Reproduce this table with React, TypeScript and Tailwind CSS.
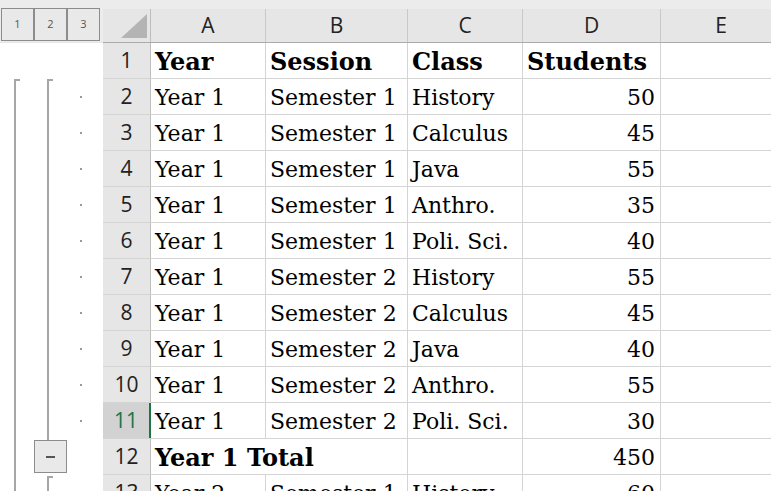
import React from "react";

type Row = { n: number; a: string; b: string; c: string; d: string };

const data: Row[] = [
  { n: 2, a: "Year 1", b: "Semester 1", c: "History", d: "50" },
  { n: 3, a: "Year 1", b: "Semester 1", c: "Calculus", d: "45" },
  { n: 4, a: "Year 1", b: "Semester 1", c: "Java", d: "55" },
  { n: 5, a: "Year 1", b: "Semester 1", c: "Anthro.", d: "35" },
  { n: 6, a: "Year 1", b: "Semester 1", c: "Poli. Sci.", d: "40" },
  { n: 7, a: "Year 1", b: "Semester 2", c: "History", d: "55" },
  { n: 8, a: "Year 1", b: "Semester 2", c: "Calculus", d: "45" },
  { n: 9, a: "Year 1", b: "Semester 2", c: "Java", d: "40" },
  { n: 10, a: "Year 1", b: "Semester 2", c: "Anthro.", d: "55" },
  { n: 11, a: "Year 1", b: "Semester 2", c: "Poli. Sci.", d: "30" },
];

const serif = { fontFamily: '"DejaVu Serif", "Liberation Serif", serif' };
const sans = { fontFamily: '"Open Sans", "Liberation Sans", sans-serif' };

function Cell({
  w,
  children,
  right,
  bold,
  last,
}: {
  w: string;
  children?: React.ReactNode;
  right?: boolean;
  bold?: boolean;
  last?: boolean;
}) {
  return (
    <div
      className={`${w} h-full shrink-0 ${last ? "" : "border-r border-[#d4d4d4]"} flex items-end pb-[1px] ${
        right ? "justify-end pr-[5px]" : "pl-[4px]"
      } ${bold ? "font-bold text-[24px]" : "text-[22px]"} whitespace-nowrap overflow-visible leading-[30px] text-black`}
      style={serif}
    >
      {children}
    </div>
  );
}

function RowHead({ n, selected }: { n: number; selected?: boolean }) {
  return (
    <div
      className={`w-[48px] h-full shrink-0 flex items-center justify-center text-[21px] ${
        selected
          ? "bg-[#d2d2d2] text-[#217346] border-r-2 border-[#217346]"
          : "bg-[#e6e6e6] text-[#222] border-r border-[#bdbdbd]"
      }`}
      style={sans}
    >
      {n}
    </div>
  );
}

function ColHead({ label, w, last }: { label: string; w: string; last?: boolean }) {
  return (
    <div className={`${w} shrink-0 h-full flex flex-col`}>
      <div className="h-[9px] bg-[#ececec]" />
      <div
        className={`flex-1 flex items-center justify-center text-[21px] text-[#222] ${
          last ? "" : "border-r border-[#c8c8c8]"
        }`}
        style={sans}
      >
        {label}
      </div>
    </div>
  );
}

function OutlineBtn({ label }: { label: string }) {
  return (
    <div
      className="w-[33px] h-[33px] border border-[#8c8c8c] bg-[#e9e9e9] flex items-center justify-center text-[11px] text-[#555]"
      style={sans}
    >
      {label}
    </div>
  );
}

export default function App() {
  const dots = data.map((_, i) => 53 + 36 * i);
  return (
    <div className="w-[771px] h-[491px] overflow-hidden bg-white flex">
      {/* Outline gutter */}
      <div className="w-[103px] shrink-0 flex flex-col">
        <div className="h-[43px] bg-[#ececec] border-b border-[#e6e6e6] pt-[8px] pl-[1px] flex">
          <OutlineBtn label="1" />
          <OutlineBtn label="2" />
          <OutlineBtn label="3" />
        </div>
        <div className="relative flex-1 bg-white">
          {/* outer bracket */}
          <div className="absolute left-[14px] top-[36px] w-[2px] h-[500px] bg-[#a6a6a6]" />
          <div className="absolute left-[14px] top-[36px] w-[6px] h-[2px] bg-[#a6a6a6]" />
          {/* inner bracket */}
          <div className="absolute left-[47px] top-[36px] w-[2px] h-[361px] bg-[#a6a6a6]" />
          <div className="absolute left-[47px] top-[36px] w-[6px] h-[2px] bg-[#a6a6a6]" />
          {dots.map((y) => (
            <div
              key={y}
              className="absolute left-[80px] w-[2px] h-[2px] bg-[#9a9a9a]"
              style={{ top: y }}
            />
          ))}
          {/* minus button */}
          <div className="absolute left-[34px] top-[397px] w-[33px] h-[33px] border border-[#8c8c8c] bg-[#e9e9e9] flex items-center justify-center">
            <div className="w-[9px] h-[2px] bg-[#555]" />
          </div>
          <div className="absolute left-[47px] top-[433px] w-[2px] h-[40px] bg-[#a6a6a6]" />
          <div className="absolute left-[47px] top-[433px] w-[6px] h-[2px] bg-[#a6a6a6]" />
        </div>
      </div>

      {/* Sheet */}
      <div className="flex-1 flex flex-col min-w-0">
        {/* column headers */}
        <div className="h-[43px] shrink-0 flex bg-[#e6e6e6] border-b border-[#ababab]">
          <div className="w-[48px] shrink-0 h-full flex flex-col">
            <div className="h-[9px] bg-[#ececec]" />
            <div className="flex-1 border-r border-[#bdbdbd] flex items-end justify-end pr-[3px] pb-[4px]">
              <svg width="26" height="24" viewBox="0 0 26 24">
                <polygon points="26,0 26,24 0,24" fill="#b4b4b4" />
              </svg>
            </div>
          </div>
          <ColHead label="A" w="w-[115px]" />
          <ColHead label="B" w="w-[142px]" />
          <ColHead label="C" w="w-[115px]" />
          <ColHead label="D" w="w-[138px]" />
          <ColHead label="E" w="w-[120px]" last />
        </div>

        {/* row 1 */}
        <div className="h-[36px] shrink-0 flex border-b border-[#d4d4d4]">
          <RowHead n={1} />
          <Cell w="w-[115px]" bold>Year</Cell>
          <Cell w="w-[142px]" bold>Session</Cell>
          <Cell w="w-[115px]" bold>Class</Cell>
          <Cell w="w-[138px]" bold>Students</Cell>
          <Cell w="w-[120px]" last />
        </div>

        {data.map((r) => (
          <div key={r.n} className="h-[36px] shrink-0 flex border-b border-[#d4d4d4]">
            <RowHead n={r.n} selected={r.n === 11} />
            <Cell w="w-[115px]">{r.a}</Cell>
            <Cell w="w-[142px]">{r.b}</Cell>
            <Cell w="w-[115px]">{r.c}</Cell>
            <Cell w="w-[138px]" right>{r.d}</Cell>
            <Cell w="w-[120px]" last />
          </div>
        ))}

        {/* row 12 total */}
        <div className="h-[36px] shrink-0 flex border-b border-[#d4d4d4]">
          <RowHead n={12} />
          <Cell w="w-[257px]" bold>Year 1 Total</Cell>
          <Cell w="w-[115px]" />
          <Cell w="w-[138px]" right>450</Cell>
          <Cell w="w-[120px]" last />
        </div>

        {/* row 13 (partially visible) */}
        <div className="h-[36px] shrink-0 flex border-b border-[#d4d4d4]">
          <RowHead n={13} />
          <Cell w="w-[115px]">Year 2</Cell>
          <Cell w="w-[142px]">Semester 1</Cell>
          <Cell w="w-[115px]">History</Cell>
          <Cell w="w-[138px]" right>60</Cell>
          <Cell w="w-[120px]" last />
        </div>
      </div>
    </div>
  );
}
